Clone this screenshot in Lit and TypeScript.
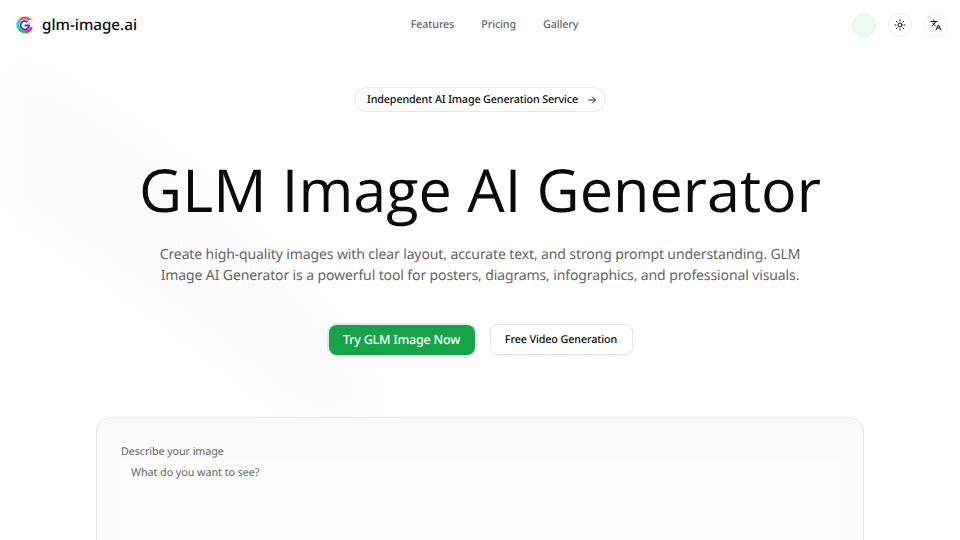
import { LitElement, html, css } from "lit";
import { customElement } from "lit/decorators.js";

@customElement("app-root")
export class AppRoot extends LitElement {
  static styles = css`
    :host { display: block; width: 960px; height: 540px; overflow: hidden; position: relative; background: #fff; font-family: "Noto Sans", sans-serif; color: #0a0a0a; text-rendering: geometricPrecision; }
    .bg { position: absolute; inset: 0; pointer-events: none; overflow: hidden; }
    .wrap { position: relative; display: flex; flex-direction: column; align-items: center; }
    nav { width: 100%; box-sizing: border-box; height: 50px; padding: 0 12px 0 16px; display: flex; justify-content: space-between; align-items: center; }
    .brand { display: flex; align-items: center; gap: 8px; font-size: 15.2px; font-weight: 500; width: 121px; white-space: nowrap; }
    .brand svg { width: 18px; height: 18px; flex: none; }
    .links { display: flex; gap: 27px; font-size: 10.75px; letter-spacing: -0.12px; color: #666; font-weight: 500; }
    .actions { display: flex; gap: 12px; align-items: center; }
    .circle { width: 24px; height: 24px; border-radius: 50%; border: 1px solid #ececec; background: #fff; display: flex; align-items: center; justify-content: center; box-sizing: border-box; }
    .circle.user { background: #ecfbf2; }
    .badge { margin-top: 37px; height: 25px; box-sizing: border-box; padding: 0 8px 0 12px; width: 252px; border: 1px solid #e8e8e8; border-radius: 13px; display: flex; align-items: center; gap: 9px; font-size: 10.75px; letter-spacing: -0.13px; font-weight: 500; background: #fff; white-space: nowrap; }
    h1 { margin: 42px 0 0; font-family: "Open Sans", sans-serif; font-weight: 400; font-size: 59.3px; line-height: 72px; white-space: nowrap; }
    p { margin: 18px 0 0; width: 680px; text-align: center; font-size: 14px; letter-spacing: -0.115px; line-height: 21px; color: #666; }
    .cta { display: flex; gap: 14px; margin-top: 38px; align-items: center; }
    .primary { height: 30px; width: 146px; border-radius: 8px; background: #16a34a; color: #fff; font-size: 12.5px; letter-spacing: -0.22px; font-weight: 500; display: flex; align-items: center; justify-content: center; box-shadow: 0 0 0 2px #e6e6e6; margin: 0 1px; }
    .secondary { height: 31px; width: 143px; box-sizing: border-box; border-radius: 8px; background: #fff; border: 1px solid #e8e8e8; box-shadow: 0 1px 3px rgba(0,0,0,.06); font-size: 10.75px; letter-spacing: -0.11px; font-weight: 500; display: flex; align-items: center; justify-content: center; }
    .card { margin-top: 62px; width: 768px; height: 300px; box-sizing: border-box; border: 1px solid #ececec; border-radius: 14px; background: #fafafa; padding: 25px 24px; box-shadow: 0 1px 3px rgba(0,0,0,.04); }
    label { display: block; font-size: 10.75px; letter-spacing: -0.08px; line-height: 18px; color: #666; }
    .area { height: 200px; background: #fcfcfc; border-radius: 6px; padding: 3px 10px; font-size: 10.75px; letter-spacing: -0.05px; line-height: 18px; color: #666; }
  `;

  render() {
    return html`
      <svg class="bg" viewBox="0 0 960 540" width="960" height="540">
        <defs>
          <filter id="b"><feGaussianBlur stdDeviation="22" /></filter>
        </defs>
        <path d="M0 50 C130 100 300 230 400 420 L300 430 C200 340 90 270 0 210 Z" fill="#fbfbfb" filter="url(#b)" />
      </svg>
      <div class="wrap">
        <nav>
          <div class="brand">
            <svg viewBox="0 0 18 18" fill="none">
              <path d="M13.9 4A7 7 0 0 0 4 4" stroke="#f0567f" stroke-width="2.8" />
              <path d="M4 4A7 7 0 0 0 3 12.6" stroke="#22c7d8" stroke-width="2.8" />
              <path d="M3 12.6A7 7 0 0 0 9 16" stroke="#35c24a" stroke-width="2.8" />
              <path d="M9 16A7 7 0 0 0 15.5 11" stroke="#e8308c" stroke-width="2.8" />
              <path d="M8.6 9.5h4.4A4.2 4.2 0 1 1 11.4 6" stroke="#3a3ac8" stroke-width="1.8" />
              <circle cx="15.6" cy="3" r="1.1" fill="#f5b52e" />
              <circle cx="13" cy="7.5" r="1" fill="#f5b52e" />
            </svg>
            glm-image.ai
          </div>
          <div class="links"><span>Features</span><span>Pricing</span><span>Gallery</span></div>
          <div class="actions">
            <div class="circle user"></div>
            <div class="circle">
              <svg width="12" height="12" viewBox="0 0 24 24" fill="none" stroke="#111" stroke-width="2" stroke-linecap="round"><circle cx="12" cy="12" r="4"/><path d="M12 2v2M12 20v2M4.9 4.9l1.4 1.4M17.7 17.7l1.4 1.4M2 12h2M20 12h2M6.3 17.7l-1.4 1.4M19.1 4.9l-1.4 1.4"/></svg>
            </div>
            <div class="circle">
              <svg width="12" height="12" viewBox="0 0 24 24" fill="none" stroke="#111" stroke-width="2" stroke-linecap="round" stroke-linejoin="round"><path d="m5 8 6 6M4 14l6-6 2-3M2 5h12M7 2h1M22 22l-5-10-5 10M14 18h6"/></svg>
            </div>
          </div>
        </nav>
        <div class="badge">
          <span>Independent AI Image Generation Service</span>
          <svg width="12" height="12" viewBox="0 0 24 24" fill="none" stroke="#111" stroke-width="2.2" stroke-linecap="round" stroke-linejoin="round"><path d="M4 12h16M13 5l7 7-7 7"/></svg>
        </div>
        <h1>GLM Image AI Generator</h1>
        <p>Create high-quality images with clear layout, accurate text, and strong prompt understanding. GLM Image AI Generator is a powerful tool for posters, diagrams, infographics, and professional visuals.</p>
        <div class="cta">
          <div class="primary">Try GLM Image Now</div>
          <div class="secondary">Free Video Generation</div>
        </div>
        <div class="card">
          <label>Describe your image</label>
          <div class="area">What do you want to see?</div>
        </div>
      </div>
    `;
  }
}
